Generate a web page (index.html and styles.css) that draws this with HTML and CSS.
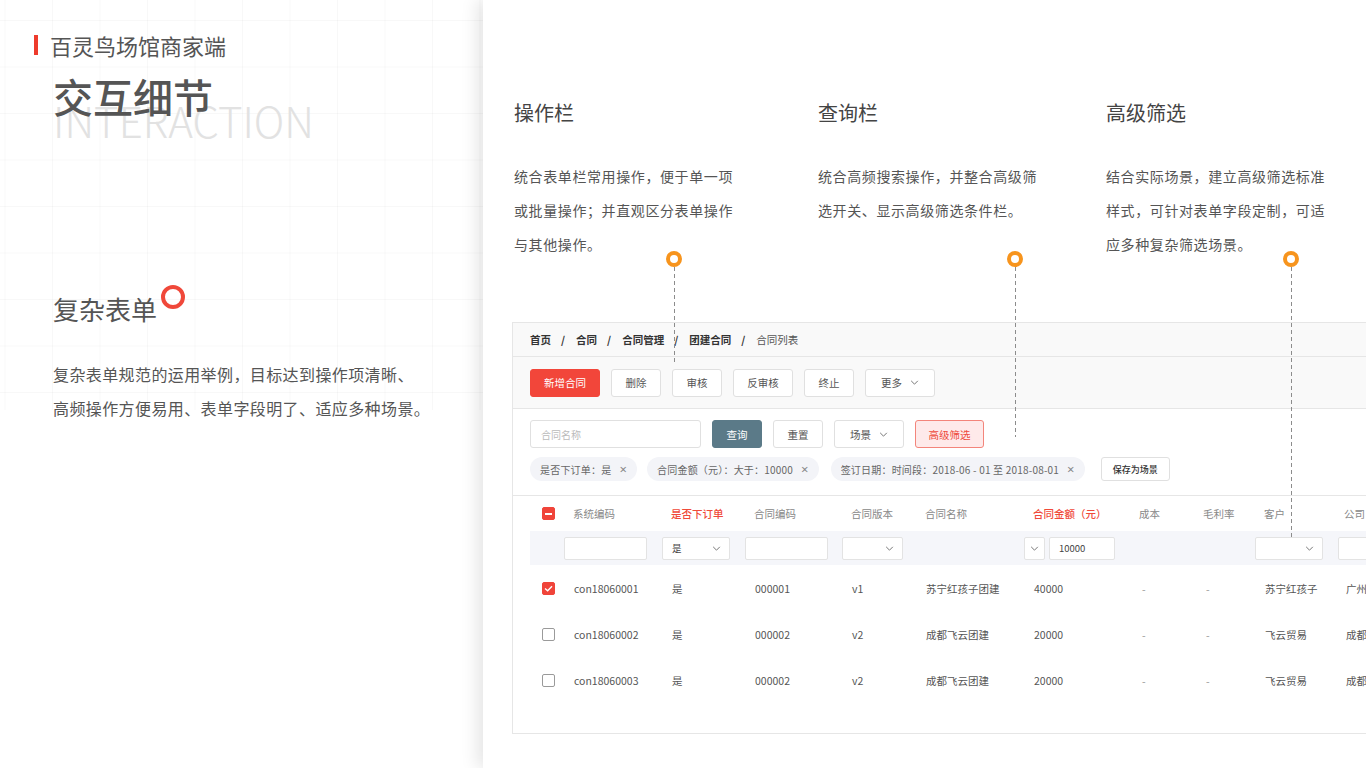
FILE: index.html
```html
<!DOCTYPE html>
<html lang="zh-CN">
<head>
    <meta charset="UTF-8">
    <meta name="viewport" content="width=device-width, initial-scale=1.0">
    <title>交互细节</title>
    <link rel="stylesheet" href="styles.css">
</head>
<body>
    <div class="page">
        <section class="intro">
            <div class="brand">百灵鸟场馆商家端</div>
            <div class="title-block">
                <h1 class="title">交互细节</h1>
                <div class="title-en">INTERACTION</div>
            </div>
            <h2 class="sub-title">复杂表单</h2>
            <p class="intro-text">复杂表单规范的运用举例，目标达到操作项清晰、<br>高频操作方便易用、表单字段明了、适应多种场景。</p>
        </section>

        <section class="detail">
            <div class="notes">
                <div class="note note-op">
                    <h3>操作栏</h3>
                    <p>统合表单栏常用操作，便于单一项<br>或批量操作；并直观区分表单操作<br>与其他操作。</p>
                </div>
                <div class="note note-query">
                    <h3>查询栏</h3>
                    <p>统合高频搜索操作，并整合高级筛<br>选开关、显示高级筛选条件栏。</p>
                </div>
                <div class="note note-filter">
                    <h3>高级筛选</h3>
                    <p>结合实际场景，建立高级筛选标准<br>样式，可针对表单字段定制，可适<br>应多种复杂筛选场景。</p>
                </div>
            </div>

            <div class="table-card">
                <div class="crumbs">
                    <span>首页</span><span class="sep">/</span>
                    <span>合同</span><span class="sep">/</span>
                    <span>合同管理</span><span class="sep">/</span>
                    <span>团建合同</span><span class="sep">/</span>
                    <span class="current">合同列表</span>
                </div>

                <div class="toolbar">
                    <button class="btn btn-danger w70">新增合同</button>
                    <button class="btn w50">删除</button>
                    <button class="btn w50">审核</button>
                    <button class="btn w60">反审核</button>
                    <button class="btn w50">终止</button>
                    <button class="btn w70">更多 <svg class="chev" viewBox="0 0 10 6" width="9" height="5"><polyline points="1,1 5,5 9,1" fill="none" stroke="#777" stroke-width="1.2"/></svg></button>
                </div>

                <div class="query">
                    <div class="query-row">
                        <div class="search-input">合同名称</div>
                        <button class="btn btn-primary w50">查询</button>
                        <button class="btn w50">重置</button>
                        <button class="btn w70">场景 <svg class="chev" viewBox="0 0 10 6" width="9" height="5"><polyline points="1,1 5,5 9,1" fill="none" stroke="#777" stroke-width="1.2"/></svg></button>
                        <button class="btn btn-filter w69">高级筛选</button>
                    </div>
                    <div class="tags">
                        <span class="tag">是否下订单：是<i class="tag-close">×</i></span>
                        <span class="tag">合同金额（元）：大于：10000<i class="tag-close">×</i></span>
                        <span class="tag tag-wide">签订日期：时间段：2018-06 - 01 至 2018-08-01<i class="tag-close">×</i></span>
                        <button class="btn btn-save">保存为场景</button>
                    </div>
                </div>

                <div class="grid-table">
                    <div class="t-row t-head">
                        <div class="cell-check"><span class="check part"></span></div>
                        <div class="th">系统编码</div>
                        <div class="th hot">是否下订单</div>
                        <div class="th">合同编码</div>
                        <div class="th">合同版本</div>
                        <div class="th">合同名称</div>
                        <div class="th hot">合同金额（元）</div>
                        <div class="th">成本</div>
                        <div class="th">毛利率</div>
                        <div class="th">客户</div>
                        <div class="th th-last">公司</div>
                    </div>
                    <div class="t-row t-filter">
                        <div></div>
                        <div><span class="f-box w83"></span></div>
                        <div><span class="f-box w68">是 <svg class="chev" viewBox="0 0 10 6" width="9" height="5"><polyline points="1,1 5,5 9,1" fill="none" stroke="#777" stroke-width="1.2"/></svg></span></div>
                        <div><span class="f-box w83"></span></div>
                        <div><span class="f-box w61 f-end"><svg class="chev" viewBox="0 0 10 6" width="9" height="5"><polyline points="1,1 5,5 9,1" fill="none" stroke="#777" stroke-width="1.2"/></svg></span></div>
                        <div></div>
                        <div class="f-pair">
                            <span class="f-box w21 f-mid"><svg class="chev" viewBox="0 0 10 6" width="9" height="5"><polyline points="1,1 5,5 9,1" fill="none" stroke="#777" stroke-width="1.2"/></svg></span>
                            <span class="f-box w66">10000</span>
                        </div>
                        <div></div>
                        <div></div>
                        <div><span class="f-box w68 f-end"><svg class="chev" viewBox="0 0 10 6" width="9" height="5"><polyline points="1,1 5,5 9,1" fill="none" stroke="#777" stroke-width="1.2"/></svg></span></div>
                        <div><span class="f-box w83"></span></div>
                    </div>
                    <div class="t-row t-body">
                        <div class="cell-check"><span class="check on"><svg viewBox="0 0 10 8" width="9" height="7"><polyline points="1,4 4,6.5 9,1.5" fill="none" stroke="#fff" stroke-width="1.6"/></svg></span></div>
                        <div class="td">con18060001</div>
                        <div class="td">是</div>
                        <div class="td">000001</div>
                        <div class="td">v1</div>
                        <div class="td">苏宁红孩子团建</div>
                        <div class="td">40000</div>
                        <div class="td dash-cell">-</div>
                        <div class="td dash-cell">-</div>
                        <div class="td">苏宁红孩子</div>
                        <div class="td td-last">广州红孩子</div>
                    </div>
                    <div class="t-row t-body">
                        <div class="cell-check"><span class="check"></span></div>
                        <div class="td">con18060002</div>
                        <div class="td">是</div>
                        <div class="td">000002</div>
                        <div class="td">v2</div>
                        <div class="td">成都飞云团建</div>
                        <div class="td">20000</div>
                        <div class="td dash-cell">-</div>
                        <div class="td dash-cell">-</div>
                        <div class="td">飞云贸易</div>
                        <div class="td td-last">成都飞云</div>
                    </div>
                    <div class="t-row t-body">
                        <div class="cell-check"><span class="check"></span></div>
                        <div class="td">con18060003</div>
                        <div class="td">是</div>
                        <div class="td">000002</div>
                        <div class="td">v2</div>
                        <div class="td">成都飞云团建</div>
                        <div class="td">20000</div>
                        <div class="td dash-cell">-</div>
                        <div class="td dash-cell">-</div>
                        <div class="td">飞云贸易</div>
                        <div class="td td-last">成都飞云</div>
                    </div>
                </div>
            </div>

            <!-- 标注点 -->
            <div class="pin pin-op"><span class="ring"></span><span class="dash"></span></div>
            <div class="pin pin-query"><span class="ring"></span><span class="dash"></span></div>
            <div class="pin pin-filter"><span class="ring"></span><span class="dash"></span></div>
        </section>
    </div>
</body>
</html>
```

FILE: styles.css
```css
* {
    margin: 0;
    padding: 0;
    box-sizing: border-box;
}

body {
    width: 1366px;
    height: 768px;
    overflow: hidden;
    background: #fff;
    font-family: "Noto Sans CJK SC", "Noto Sans", sans-serif;
    color: #555;
}

button {
    font-family: inherit;
    cursor: pointer;
}

.page {
    display: flex;
    height: 768px;
}

/* 左侧说明 */
.intro {
    position: relative;
    flex: none;
    width: 483px;
    padding: 30px 0 0 53px;
}

.intro::before {
    content: "";
    position: absolute;
    left: 0;
    top: 0;
    width: 100%;
    height: 410px;
    background-image:
        linear-gradient(to right, rgba(0,0,0,0.028) 1px, transparent 1px),
        linear-gradient(to bottom, rgba(0,0,0,0.028) 1px, transparent 1px);
    background-size: 47.5px 46.5px;
    background-position: 4.5px 20px;
}

.intro > * {
    position: relative;
}

.brand {
    display: flex;
    align-items: center;
    margin-left: -19px;
    font-size: 22px;
    line-height: 30px;
    color: #555;
}

.brand::before {
    content: "";
    width: 4px;
    height: 20px;
    background: #ee3b2c;
    margin-right: 12px;
}

.title {
    position: relative;
    z-index: 2;
    margin-top: 12px;
    font-size: 40px;
    line-height: 48px;
    font-weight: 500;
    color: #555;
}

.title-en {
    position: relative;
    z-index: 1;
    margin-top: -21px;
    font-size: 42px;
    line-height: 42px;
    font-weight: 300;
    color: #e2e2e2;
}

.sub-title {
    width: max-content;
    margin-top: 150px;
    font-size: 26px;
    line-height: 36px;
    font-weight: 400;
    color: #555;
}

.sub-title::after {
    content: "";
    position: absolute;
    left: calc(100% + 4px);
    top: -6px;
    width: 16px;
    height: 16px;
    border: 4px solid #f0483a;
    border-radius: 50%;
}

.intro-text {
    margin-top: 30px;
    font-size: 16px;
    line-height: 34px;
    letter-spacing: 0.4px;
    color: #555;
}

/* 右侧内容 */
.detail {
    position: relative;
    z-index: 1;
    flex: 1;
    overflow: hidden;
    background: #fff;
    box-shadow: -6px 0 16px rgba(0,0,0,0.1);
    padding: 99px 0 0 31px;
}

.notes {
    display: flex;
}

.note {
    flex: none;
}

.note-op { width: 304px; }
.note-query { width: 288px; }

.note h3 {
    font-size: 20px;
    line-height: 28px;
    font-weight: 400;
    color: #444;
}

.note p {
    margin-top: 32px;
    font-size: 14px;
    line-height: 34px;
    letter-spacing: 0.6px;
    color: #555;
    white-space: nowrap;
}

.table-card {
    width: 1000px;
    margin: 61px 0 0 -2px;
    border: 1px solid #e6e6e6;
}

.crumbs {
    display: flex;
    align-items: center;
    height: 34px;
    padding-left: 17px;
    background: #f9f9f9;
    border-bottom: 1px solid #e6e6e6;
    font-size: 10.5px;
    font-weight: 700;
    color: #333;
}

.crumbs .sep {
    margin: 0 11px 0 10px;
}

.crumbs .current {
    font-weight: 400;
    color: #555;
}

.toolbar {
    display: flex;
    align-items: center;
    gap: 11px;
    height: 52px;
    padding-left: 17px;
    background: #f9f9f9;
    border-bottom: 1px solid #e6e6e6;
}

.btn {
    display: flex;
    align-items: center;
    justify-content: center;
    gap: 8px;
    height: 28px;
    border: 1px solid #e0e0e0;
    border-radius: 3px;
    background: #fff;
    font-size: 10.5px;
    color: #555;
}

.w50 { width: 50px; }
.w60 { width: 60px; }
.w69 { width: 69px; }
.w70 { width: 70px; }

.btn-danger {
    background: #f2463a;
    border-color: #f2463a;
    color: #fff;
}

.btn-primary {
    background: #5b7a88;
    border-color: #5b7a88;
    color: #fff;
}

.btn-filter {
    background: #feeaea;
    border-color: #f3857b;
    color: #ee4a3c;
}

.query {
    height: 87px;
    padding: 11px 17px 0;
    border-bottom: 1px solid #e6e6e6;
}

.query-row {
    display: flex;
    align-items: center;
    gap: 11px;
}

.search-input {
    display: flex;
    align-items: center;
    width: 171px;
    height: 28px;
    padding-left: 10px;
    border: 1px solid #e0e0e0;
    border-radius: 3px;
    font-size: 10px;
    color: #bbb;
}

.tags {
    display: flex;
    align-items: center;
    gap: 10px;
    margin-top: 9px;
}

.tag {
    display: flex;
    align-items: center;
    height: 24px;
    padding: 0 10px;
    border-radius: 12px;
    background: #f3f4f8;
    font-size: 10px;
    letter-spacing: 0.2px;
    color: #666;
    white-space: nowrap;
}

.tag-close {
    margin-left: 8px;
    font-family: "Noto Sans", sans-serif;
    font-style: normal;
    font-size: 13px;
    line-height: 1;
    color: #888;
}

.tag-wide {
    margin-left: 2px;
}

.btn-save {
    width: 69px;
    height: 24px;
    margin-left: 6px;
    font-size: 9px;
    font-weight: 500;
    color: #333;
}

/* 表格 */
.grid-table {
    height: 237px;
    padding-left: 17px;
}

.t-row {
    display: grid;
    grid-template-columns: 34px 98px 83px 97px 74px 108px 106px 64px 61px 83px 100px;
    align-items: center;
    white-space: nowrap;
}

.t-head { height: 35px; }

.t-filter {
    height: 34px;
    background: #f5f6fa;
}

.t-body { height: 46px; }

.cell-check {
    display: flex;
    padding-left: 12px;
}

.th {
    padding-left: 9px;
    font-size: 10.5px;
    color: #888;
}

.th.hot {
    color: #f04a3a;
    font-weight: 500;
}

.th-last { padding-left: 6px; }

.td {
    padding-left: 10px;
    font-size: 10.5px;
    color: #555;
}

.td-last { padding-left: 8px; }

.dash-cell {
    padding-left: 12px;
    color: #999;
}

.f-box {
    display: flex;
    align-items: center;
    justify-content: space-between;
    height: 23px;
    padding: 0 8px 0 9px;
    border: 1px solid #e3e3e3;
    border-radius: 2px;
    background: #fff;
    font-size: 9.5px;
    color: #444;
}

.f-end { justify-content: flex-end; }
.f-mid { justify-content: center; padding: 0; }

.f-pair {
    display: flex;
    gap: 4px;
}

.w21 { width: 21px; }
.w61 { width: 61px; }
.w66 { width: 66px; }
.w68 { width: 68px; }
.w83 { width: 83px; }

.check {
    display: flex;
    align-items: center;
    justify-content: center;
    width: 13px;
    height: 13px;
    border: 1.5px solid #9a9a9a;
    border-radius: 2px;
    background: #fff;
}

.check.on,
.check.part {
    background: #f0443a;
    border-color: #f0443a;
}

.check.part::after {
    content: "";
    width: 7px;
    height: 2px;
    background: #fff;
}

/* 标注 */
.pin {
    position: absolute;
    top: 251px;
    display: flex;
    flex-direction: column;
    align-items: center;
    width: 16px;
}

.pin .ring {
    width: 16px;
    height: 16px;
    border: 4px solid #f7941d;
    border-radius: 50%;
    background: #fff;
}

.pin .dash {
    width: 1px;
    background: repeating-linear-gradient(to bottom, #8c8c8c 0 4px, transparent 4px 7px);
}

.pin-op { left: 183px; }
.pin-op .dash { height: 98px; }

.pin-query { left: 524px; }
.pin-query .dash { height: 170px; }

.pin-filter { left: 800px; }
.pin-filter .dash { height: 273px; }
```
